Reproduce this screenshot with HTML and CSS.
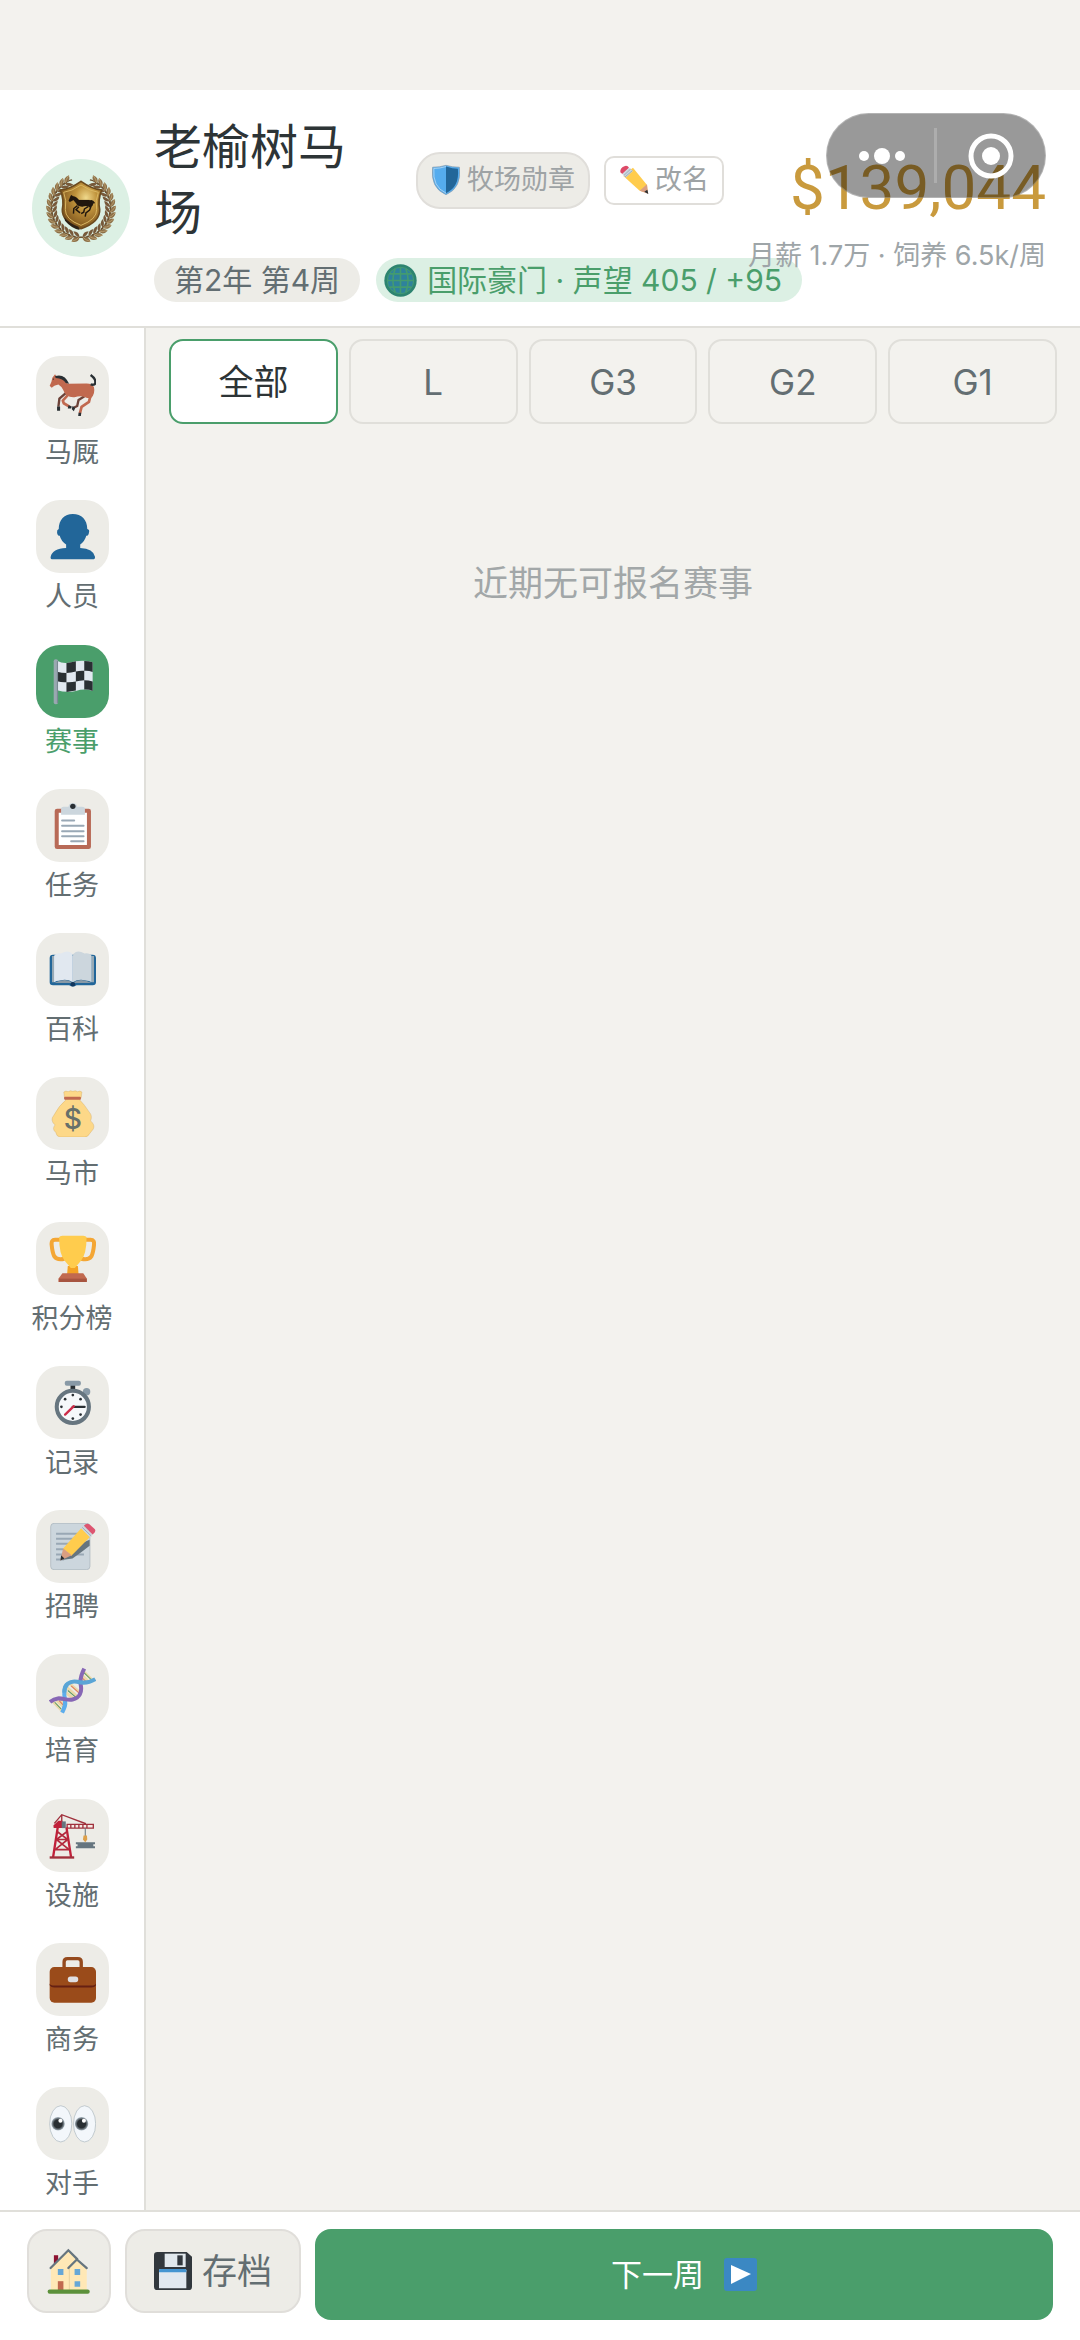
FILE: index.html
```html
<!DOCTYPE html>
<html lang="zh-CN">
<head>
    <meta charset="UTF-8">
    <meta name="viewport" content="width=device-width, initial-scale=1.0">
    <title>老榆树马场</title>
    <link rel="stylesheet" href="styles.css">
</head>
<body>
    <div class="app">
        <header class="header">
            <div class="header__avatar">
                <svg viewBox="-105 -105 210 210" aria-hidden="true">
                    <defs>
                        <radialGradient id="gold" cx="62%" cy="35%" r="75%">
                            <stop offset="0" stop-color="#f0d98c"/>
                            <stop offset=".35" stop-color="#c0933c"/>
                            <stop offset="1" stop-color="#6d4415"/>
                        </radialGradient>
                        <g id="leaf">
                            <path d="M-14-86Q2-92 16-87" fill="none" stroke="#6a5030" stroke-width="4"/>
                            <path d="M-8-88Q-6-106 14-104Q13-88-8-88Z" fill="#8d7048"/>
                            <path d="M-6-88Q-2-96 13-103" fill="none" stroke="#c4aa7a" stroke-width="2"/>
                            <path d="M-8-87Q4-88 13-72Q-4-70-8-87Z" fill="#77593a"/>
                        </g>
                        <g id="branch">
                            <use href="#leaf" transform="rotate(188)"/>
                            <use href="#leaf" transform="rotate(200)"/>
                            <use href="#leaf" transform="rotate(211)"/>
                            <use href="#leaf" transform="rotate(222)"/>
                            <use href="#leaf" transform="rotate(233)"/>
                            <use href="#leaf" transform="rotate(244)"/>
                            <use href="#leaf" transform="rotate(255)"/>
                            <use href="#leaf" transform="rotate(266)"/>
                            <use href="#leaf" transform="rotate(277)"/>
                            <use href="#leaf" transform="rotate(288)"/>
                            <use href="#leaf" transform="rotate(299)"/>
                            <use href="#leaf" transform="rotate(310)"/>
                            <use href="#leaf" transform="rotate(321)"/>
                            <use href="#leaf" transform="rotate(332)"/>
                        </g>
                    </defs>
                    <use href="#branch"/>
                    <use href="#branch" transform="scale(-1 1)"/>
                    <path d="M-62-54Q-34-56 0-80Q34-56 62-54Q50-24 56 4Q58 42 0 62Q-58 42-56 4Q-50-24-62-54Z" fill="url(#gold)" stroke="#6b4a1e" stroke-width="5"/>
                    <path d="M-52-47Q-28-50 0-69Q28-50 52-47Q42-22 47 4Q48 34 0 52Q-48 34-47 4Q-42-22-52-47Z" fill="none" stroke="#d9b662" stroke-width="3"/>
                    <path d="M-48 38Q-30 60-4 66L-8 56Q-34 48-50 28Z" fill="#2d2116"/>
                    <g transform="translate(-38 -48) scale(.55)" fill="#20160e" stroke="#20160e">
                        <path d="M2 48L12 22L18 16L22 22Q44 24 58 44L112 44Q130 44 136 60Q134 80 118 84Q98 72 76 80Q50 80 42 62L28 44L8 54Z"/>
                        <path d="M122 48Q134 46 142 62M50 74L30 90L28 118M58 80L42 96L64 114M108 80L88 92L84 110L70 118M124 78L116 98L96 114L92 134" fill="none" stroke-width="8"/>
                    </g>
                </svg>
            </div>
            <div class="header__info">
                <div class="header__title">
                    <h1 class="header__name">老榆树马场</h1>
                    <button type="button" class="tag tag--medal">
                        <svg class="tag__icon" viewBox="0 0 96 96" aria-hidden="true">
                            <path d="M48 1Q28 7 5 7Q-3 74 48 95Q99 74 91 7Q68 7 48 1Z" fill="#55acee" stroke="#8899a6" stroke-width="2"/>
                            <path d="M48 5Q70 12 86 12Q92 70 48 90Z" fill="#226699"/>
                            <path d="M48 5Q28 11 9 11Q4 70 48 90" fill="none" stroke="#d5e7f3" stroke-width="2"/>
                        </svg>
                        牧场勋章
                    </button>
                    <button type="button" class="tag tag--rename">
                        <svg class="tag__icon" viewBox="0 0 90 90" aria-hidden="true">
                            <path d="M24 22L42 8L84 60L86 84L62 77L14 34Z" fill="#ffcc4d"/>
                            <path d="M62 77L84 58L87 86Z" fill="#d99e82"/>
                            <path d="M76 80L85 74L88 87Z" fill="#292f33"/>
                            <path d="M4 22Q2 8 18 3Q26 1 30 8L10 27Z" fill="#dd4a68"/>
                            <path d="M10 27L30 8L42 18L20 38Z" fill="#ccd6dd"/>
                            <path d="M14 32L35 12M18 36L40 17" stroke="#8899a6" stroke-width="2"/>
                        </svg>
                        改名
                    </button>
                </div>
                <div class="header__chips">
                    <span class="chip">第2年 第4周</span>
                    <span class="chip chip--rank">
                        <svg class="chip__icon" viewBox="0 0 100 100" aria-hidden="true">
                            <circle cx="50" cy="50" r="49" fill="#2d8470"/>
                            <circle cx="50" cy="50" r="40" fill="#2e829c"/>
                            <path d="M50 10V90M10 50H90M18 30H82M18 70H82M34 14Q20 50 34 86M66 14Q80 50 66 86" fill="none" stroke="#439b70" stroke-width="5"/>
                            <circle cx="50" cy="50" r="40" fill="none" stroke="#439b70" stroke-width="3"/>
                        </svg>
                        国际豪门 · 声望 405 / +95
                    </span>
                </div>
            </div>
            <div class="header__money">
                <strong class="header__cash">$139,044</strong>
                <span class="header__cost">月薪 1.7万 · 饲养 6.5k/周</span>
            </div>
            <div class="capsule">
                <button type="button" class="capsule__btn" aria-label="更多">
                    <svg width="48" height="18" viewBox="0 0 48 18" fill="#fff"><circle cx="6" cy="9" r="5"/><circle cx="24" cy="9" r="8"/><circle cx="42" cy="9" r="5"/></svg>
                </button>
                <button type="button" class="capsule__btn" aria-label="关闭">
                    <svg width="46" height="46" viewBox="0 0 46 46"><circle cx="23" cy="23" r="20" fill="none" stroke="#fff" stroke-width="5"/><circle cx="23" cy="23" r="9" fill="#fff"/></svg>
                </button>
            </div>
        </header>

        <div class="main">
            <nav class="sidebar">
                <button type="button" class="nav">
                    <span class="nav__icon">
                        <svg viewBox="0 0 140 140" aria-hidden="true">
                            <path d="M108 80L88 92L84 110L72 116" fill="none" stroke="#6d4238" stroke-width="7"/>
                            <path d="M50 72L31 88L28 112" fill="none" stroke="#6d4238" stroke-width="7"/>
                            <path d="M56 78L41 94L44 102L62 113M124 78L119 98L97 113L92 132" fill="none" stroke="#c1694f" stroke-width="8" stroke-linejoin="round"/>
                            <path d="M2 50Q8 40 10 26L18 16L22 22Q44 26 56 44L112 43Q130 44 134 54Q138 72 126 86Q116 88 108 84Q94 78 76 84Q50 86 42 62Q38 52 28 46L16 50L8 56Z" fill="#c1694f"/>
                            <path d="M18 21Q46 12 60 44L50 42Q42 28 20 27Z" fill="#292f33"/>
                            <path d="M124 46Q139 50 138 38Q138 28 124 18" fill="none" stroke="#292f33" stroke-width="7"/>
                            <circle cx="13" cy="30" r="2" fill="#292f33"/>
                            <path d="M24 112H33V124H24ZM58 108L68 112L66 118H56ZM70 110L78 116L74 126L68 120ZM88 130L96 130L95 140H87Z" fill="#292f33"/>
                        </svg>
                    </span>
                    马厩
                </button>
                <button type="button" class="nav">
                    <span class="nav__icon">
                        <svg viewBox="0 0 140 140" aria-hidden="true">
                            <path d="M71 3C97 3 114 20 114 48Q122 50 119 58Q118 68 111 68Q107 84 93 94V104Q132 106 137 130Q138 138 130 138H12Q3 138 5 130Q10 106 51 104V94Q36 84 32 68Q25 68 24 58Q23 50 29 48C29 20 46 3 71 3Z" fill="#226699"/>
                        </svg>
                    </span>
                    人员
                </button>
                <button type="button" class="nav nav--active" aria-current="page">
                    <span class="nav__icon">
                        <svg viewBox="0 0 140 140" aria-hidden="true">
                            <path d="M24 8Q38 16 52 15Q66 14 80 10Q106 6 130 13V98Q106 90 80 98Q52 104 24 96Z" fill="#e1e8f0"/>
                            <path d="M52 15Q66 14 80 10V40Q66 44 52 45ZM105 9Q118 9 130 13V42Q118 37 105 38ZM24 41Q38 45 52 45V72Q38 73 24 69ZM80 40Q92 37 105 38V66Q92 67 80 70ZM52 72Q66 73 80 70V97Q66 100 52 101ZM105 66Q118 66 130 70V98Q118 93 105 94Z" fill="#292f33"/>
                            <rect x="14" y="4" width="13" height="134" rx="6" fill="#99a8b0"/>
                            <path d="M25 9V134" stroke="#66757f" stroke-width="2"/>
                        </svg>
                    </span>
                    赛事
                </button>
                <button type="button" class="nav">
                    <span class="nav__icon">
                        <svg viewBox="0 0 140 140" aria-hidden="true">
                            <rect x="17" y="20" width="108" height="120" rx="7" fill="#b86a57"/>
                            <path d="M29 32H113V128H29Z" fill="#fff"/>
                            <path d="M36 38V20Q36 14 44 14H58Q60 3 71 3Q82 3 84 14H98Q107 14 107 20V38Z" fill="#ccd6dd"/>
                            <circle cx="71" cy="13" r="8" fill="#292f33"/>
                            <path d="M39 55H75M39 71H103M39 87H103M39 102H103M66 117H103" stroke="#99a8b5" stroke-width="6" stroke-linecap="round"/>
                        </svg>
                    </span>
                    任务
                </button>
                <button type="button" class="nav">
                    <span class="nav__icon">
                        <svg viewBox="0 0 140 140" aria-hidden="true">
                            <path d="M2 36Q2 26 12 26H130Q140 26 140 36V108Q140 117 130 117H82Q71 124 60 117H12Q2 117 2 108Z" fill="#226699"/>
                            <path d="M9 30H15V108H9ZM127 30H134V108H127Z" fill="#99aab5"/>
                            <path d="M15 30Q20 20 36 22Q52 14 62 18Q71 22 71 30V108Q55 98 36 102Q20 104 15 108Z" fill="#e1e8f0"/>
                            <path d="M127 30Q122 20 106 22Q90 14 80 18Q71 22 71 30V108Q87 98 106 102Q122 104 127 108Z" fill="#ccd6dd"/>
                            <path d="M15 110Q50 92 71 110Q92 92 127 110Z" fill="#8899a6"/>
                            <circle cx="71" cy="114" r="7" fill="#12365c"/>
                        </svg>
                    </span>
                    百科
                </button>
                <button type="button" class="nav">
                    <span class="nav__icon">
                        <svg viewBox="0 0 140 140" aria-hidden="true">
                            <path d="M46 22L44 6Q50 1 57 5Q64 0 71 4Q79 0 85 5Q92 1 98 6L96 22L92 30Q106 44 120 66Q130 76 124 92Q138 104 132 116Q126 124 121 130Q116 140 106 140H32Q22 138 20 126Q8 116 18 104Q2 90 14 76Q30 46 50 30Z" fill="#fdd888" stroke="#c9a05f" stroke-width="1"/>
                            <rect x="45" y="20" width="50" height="9" rx="3" fill="#c1694f"/>
                            <text x="71" y="115" class="bag-sign">$</text>
                        </svg>
                    </span>
                    马市
                </button>
                <button type="button" class="nav">
                    <span class="nav__icon">
                        <svg viewBox="0 0 140 140" aria-hidden="true">
                            <path d="M35 14H18Q6 14 8 30Q10 52 16 64Q24 76 46 71M107 14H124Q136 14 134 30Q132 52 126 64Q118 76 96 71" fill="none" stroke="#f4a634" stroke-width="12"/>
                            <path d="M56 92H86L88 116H54Z" fill="#f4a223"/>
                            <path d="M30 7Q32 2 40 2H102Q110 2 112 7Q112 60 94 78Q84 90 77 98H65Q58 90 48 78Q30 60 30 7Z" fill="#ffcc4d"/>
                            <path d="M40 114H102L113 130V140H28V130Z" fill="#c1694f"/>
                            <path d="M30 130H112V140H30Z" fill="#a75540"/>
                        </svg>
                    </span>
                    积分榜
                </button>
                <button type="button" class="nav">
                    <span class="nav__icon">
                        <svg viewBox="0 0 140 140" aria-hidden="true">
                            <path d="M64 18H78V32H64Z" fill="#292f33"/>
                            <rect x="47" y="5" width="48" height="15" rx="6" fill="#8899a6"/>
                            <circle cx="112" cy="38" r="11" fill="#8899a6"/>
                            <circle cx="71" cy="83" r="48" fill="#f5f8fa" stroke="#66757f" stroke-width="12"/>
                            <g fill="#292f33"><circle cx="71" cy="48" r="4"/><circle cx="71" cy="118" r="4"/><circle cx="37" cy="83" r="4"/><circle cx="48" cy="60" r="4"/><circle cx="94" cy="60" r="4"/><circle cx="94" cy="106" r="4"/></g>
                            <path d="M71 83H106" stroke="#292f33" stroke-width="7" stroke-linecap="round"/>
                            <path d="M74 81L48 106" stroke="#cc2b48" stroke-width="7" stroke-linecap="round"/>
                        </svg>
                    </span>
                    记录
                </button>
                <button type="button" class="nav">
                    <span class="nav__icon">
                        <svg viewBox="0 0 140 140" aria-hidden="true">
                            <rect x="5" y="1" width="117" height="138" rx="10" fill="#ccd6dd" stroke="#a5b1ba" stroke-width="2"/>
                            <path d="M21 32H88M21 47H75M21 62H60M21 78H52M21 94H104M21 109H45" stroke="#99a8b5" stroke-width="6"/>
                            <path d="M38 110L70 106Q96 88 121 68V50L96 60Z" fill="#66757f"/>
                            <path d="M42 76L96 16L122 42L66 98Z" fill="#ffcc4d"/>
                            <path d="M42 76L68 96L34 112Z" fill="#d99e82"/>
                            <path d="M36 96L46 106L34 112Z" fill="#292f33"/>
                            <path d="M96 16L104 8L130 34L122 42Z" fill="#ccd6dd"/>
                            <path d="M99 13L126 39" stroke="#8899a6" stroke-width="2"/>
                            <path d="M104 8Q112-1 122 5L136 18Q142 25 130 34Z" fill="#dd5570"/>
                        </svg>
                    </span>
                    招聘
                </button>
                <button type="button" class="nav">
                    <span class="nav__icon">
                        <svg viewBox="0 0 140 140" aria-hidden="true">
                            <path d="M12 104L40 132M22 100L44 120M32 97L46 110M100 10L130 40M98 24L118 44M96 36L108 48" stroke="#ecd9a9" stroke-width="8"/>
                            <path d="M52 60L88 92M62 50L94 78M50 76L76 96" stroke="#ecd9a9" stroke-width="9"/>
                            <path d="M17 105L36 125M104 17L126 38M56 70L82 92" stroke="#5c9a63" stroke-width="3"/>
                            <path d="M30 100L42 113M98 32L112 45M66 56L90 78" stroke="#e07a5f" stroke-width="3"/>
                            <path d="M39 136C46 122 50 116 48 98C44 80 42 64 54 52" fill="none" stroke="#5dadec" stroke-width="12"/>
                            <path d="M3 104C30 82 48 102 70 97C92 92 98 74 95 56C91 38 96 22 105 5" fill="none" stroke="#8767b5" stroke-width="12"/>
                            <path d="M46 76C44 52 62 40 84 44C106 50 122 46 138 36" fill="none" stroke="#5aa5d6" stroke-width="12"/>
                        </svg>
                    </span>
                    培育
                </button>
                <button type="button" class="nav">
                    <span class="nav__icon">
                        <svg viewBox="0 0 140 140" aria-hidden="true">
                            <path d="M16 34L38 8L110 35M38 8V48" fill="none" stroke="#a0303c" stroke-width="4"/>
                            <path d="M54 37H132V48H54Z" fill="#f5e9e4" stroke="#a0303c" stroke-width="4"/>
                            <path d="M65 37V48M77 37V48M89 37V48M101 37V48M113 37V48" stroke="#a0303c" stroke-width="4"/>
                            <path d="M12 136L26 46M66 136L52 46" stroke="#c0203a" stroke-width="7"/>
                            <path d="M24 58L56 82L18 112M54 58L22 82L60 112M22 82H56M18 112H60" fill="none" stroke="#b3283c" stroke-width="5"/>
                            <path d="M2 132H75V139H2Z" fill="#a0303c"/>
                            <path d="M13 40L28 26H40V48H14Z" fill="#c0203a"/>
                            <path d="M38 28H50V48H38Z" fill="#66757f"/>
                            <path d="M108 48V76" stroke="#66757f" stroke-width="3"/>
                            <path d="M103 70H113L114 82L108 90L101 82Z" fill="#dda04a"/>
                            <path d="M80 90H137V96H132V102H137V108H80V102H85V96H80Z" fill="#66757f"/>
                        </svg>
                    </span>
                    设施
                </button>
                <button type="button" class="nav">
                    <span class="nav__icon">
                        <svg viewBox="0 0 140 140" aria-hidden="true">
                            <path d="M45 34V18Q45 8 55 8H86Q96 8 96 18V34" fill="none" stroke="#954a1e" stroke-width="10"/>
                            <rect x="2" y="33" width="138" height="106" rx="14" fill="#9a4b1a"/>
                            <path d="M2 82Q4 88 16 88H126Q138 88 140 82V87Q136 94 126 94H16Q6 94 2 87Z" fill="#662113"/>
                            <rect x="56" y="61" width="31" height="17" rx="8" fill="#dfdfe3"/>
                        </svg>
                    </span>
                    商务
                </button>
                <button type="button" class="nav">
                    <span class="nav__icon">
                        <svg viewBox="0 0 140 140" aria-hidden="true">
                            <defs><radialGradient id="pupil"><stop offset=".6" stop-color="#292f33"/><stop offset="1" stop-color="#a9b6bf"/></radialGradient></defs>
                            <ellipse cx="35" cy="71" rx="33" ry="54" fill="#f3f7fb" stroke="#aab5bc" stroke-width="2"/>
                            <ellipse cx="106" cy="71" rx="33" ry="54" fill="#f3f7fb" stroke="#aab5bc" stroke-width="2"/>
                            <circle cx="27" cy="71" r="20" fill="url(#pupil)"/><circle cx="97" cy="71" r="20" fill="url(#pupil)"/>
                            <circle cx="34" cy="62" r="6" fill="#fff"/><circle cx="104" cy="62" r="6" fill="#fff"/>
                        </svg>
                    </span>
                    对手
                </button>
            </nav>

            <main class="content">
                <div class="tabs">
                    <button type="button" class="tabs__item tabs__item--active">全部</button>
                    <button type="button" class="tabs__item">L</button>
                    <button type="button" class="tabs__item">G3</button>
                    <button type="button" class="tabs__item">G2</button>
                    <button type="button" class="tabs__item">G1</button>
                </div>
                <p class="empty">近期无可报名赛事</p>
            </main>
        </div>

        <footer class="footer">
            <button type="button" class="btn btn--home" aria-label="主页">
                <svg width="46" height="46" viewBox="0 0 140 140" aria-hidden="true">
                    <path d="M24 22H37V50H24Z" fill="#8d1230"/>
                    <path d="M15 58L69 9L95 36L124 60V130H15Z" fill="#ffe8b6"/>
                    <path d="M71 58V130" stroke="#e8cf9b" stroke-width="3"/>
                    <path d="M14 61L68 7L95 34M68 61L94 35L124 61" fill="none" stroke="#66757f" stroke-width="7" stroke-linecap="round"/>
                    <path d="M36 64H53V82H36ZM87 64H104V82H87ZM87 101H104V118H87Z" fill="#67a7d6"/>
                    <path d="M36 101H53V128H36Z" fill="#c1694f"/>
                    <rect x="5" y="126" width="128" height="13" rx="6" fill="#5c913b"/>
                </svg>
            </button>
            <button type="button" class="btn btn--save">
                <svg width="38" height="38" viewBox="0 0 114 114" aria-hidden="true">
                    <path d="M10 0H98L114 14V104Q114 114 104 114H10Q0 114 0 104V10Q0 0 10 0Z" fill="#31373d"/>
                    <path d="M32 5H95V45H32Z" fill="#e1e8ed"/>
                    <path d="M70 10H86V40H70Z" fill="#31373d"/>
                    <path d="M15 55Q15 51 20 51H92Q97 51 97 55V109H15Z" fill="#e1e8f0"/>
                    <path d="M15 61V55Q15 51 20 51H92Q97 51 97 55V61Z" fill="#4595d2"/>
                </svg>
                存档
            </button>
            <button type="button" class="btn btn--next">
                下一周
                <svg width="33" height="33" viewBox="0 0 33 33" aria-hidden="true">
                    <rect width="33" height="33" rx="3" fill="#3b88c3"/>
                    <path d="M7 7L27 16L7 26Z" fill="#fff"/>
                </svg>
            </button>
        </footer>
    </div>
</body>
</html>
```
FILE: styles.css
```css
* {
    box-sizing: border-box;
}
body {
    margin: 0;
    background: #f3f2ee;
    color: #2d3436;
    font-family: Inter, "Noto Sans CJK SC", sans-serif;
}
button {
    margin: 0;
    padding: 0;
    border: 0;
    background: none;
    color: inherit;
    font-family: inherit;
    cursor: pointer;
}
svg {
    display: block;
    flex: none;
}
.app {
    display: flex;
    flex-direction: column;
    min-height: 100vh;
    padding-top: 90px;
}

/* header */
.header {
    position: relative;
    display: flex;
    align-items: center;
    gap: 24px;
    padding: 24px 34px 24px 32px;
    border-bottom: 2px solid #e0dfda;
    background: #fff;
}
.header__avatar {
    display: flex;
    align-items: center;
    justify-content: center;
    flex: none;
    width: 98px;
    height: 98px;
    border-radius: 50%;
    background: #dcf0e4;
}
.header__avatar svg {
    width: 70px;
    height: 70px;
}
.header__info {
    flex: 1;
    min-width: 0;
}
.header__title {
    display: flex;
    align-items: center;
    gap: 14px;
}
.header__name {
    flex: 1;
    margin: 0;
    padding-right: 12px;
    font-size: 48px;
    font-weight: 400;
    line-height: 66px;
}
.tag {
    display: flex;
    align-items: center;
    flex: none;
    gap: 6px;
    padding: 0 13px;
    border: 2px solid #e0deda;
    color: #9ea3a5;
    font-size: 27px;
    line-height: 36px;
    white-space: nowrap;
}
.tag--medal {
    height: 57px;
    border-radius: 24px;
    background: #edece7;
}
.tag--rename {
    height: 49px;
    border-radius: 10px;
    background: #fff;
}
.tag__icon {
    width: 30px;
    height: 32px;
}
.header__chips {
    display: flex;
    gap: 16px;
    margin-top: 12px;
}
.chip {
    display: flex;
    align-items: center;
    flex: none;
    gap: 10px;
    height: 44px;
    padding: 0 20px;
    border-radius: 22px;
    background: #edece7;
    color: #636e72;
    font-size: 30px;
    line-height: 44px;
    white-space: nowrap;
}
.chip--rank {
    padding-left: 8px;
    background: #dcf0e4;
    color: #4a9e6b;
}
.chip__icon {
    width: 33px;
    height: 33px;
}
.header__money {
    position: relative;
    display: flex;
    flex-direction: column;
    flex: none;
    text-align: right;
    white-space: nowrap;
}
.header__cash {
    color: #c99a3d;
    font-family: Roboto, sans-serif;
    font-size: 62px;
    font-weight: 400;
    line-height: 96px;
}
.header__cost {
    color: #9ea5a8;
    font-size: 27px;
    line-height: 40px;
}
.capsule {
    position: absolute;
    top: 23px;
    right: 34px;
    display: flex;
    width: 220px;
    height: 85px;
    border: 1px solid rgba(255, 255, 255, .25);
    border-radius: 43px;
    background: rgba(0, 0, 0, .4);
}
.capsule__btn {
    position: relative;
    display: flex;
    align-items: center;
    justify-content: center;
    flex: 1;
}
.capsule__btn + .capsule__btn:before {
    content: "";
    position: absolute;
    top: 14px;
    bottom: 14px;
    left: -2px;
    width: 3px;
    background: rgba(255, 255, 255, .2);
}

/* sidebar + content */
.main {
    display: flex;
    flex: 1;
}
.sidebar {
    display: flex;
    flex-direction: column;
    justify-content: space-between;
    flex: none;
    gap: 16px;
    width: 146px;
    padding: 28px 0 8px;
    border-right: 2px solid #e0dfda;
    background: #fff;
}
.nav {
    display: flex;
    flex-direction: column;
    align-items: center;
    gap: 6px;
    color: #636e72;
    font-size: 27px;
    line-height: 36px;
}
.nav__icon {
    display: flex;
    align-items: center;
    justify-content: center;
    width: 73px;
    height: 73px;
    border-radius: 24px;
    background: #edece7;
}
.nav__icon svg {
    width: 47px;
    height: 47px;
}
.nav--active {
    color: #4a9e6b;
}
.nav--active .nav__icon {
    background: #4a9e6b;
}
.bag-sign {
    fill: #67706a;
    font: 500 84px Inter, sans-serif;
    text-anchor: middle;
}
.content {
    flex: 1;
    padding: 11px 23px;
}
.tabs {
    display: flex;
    gap: 11px;
}
.tabs__item {
    flex: 1;
    height: 85px;
    border: 2px solid #e0dfda;
    border-radius: 14px;
    color: #636e72;
    font-size: 35px;
    line-height: 50px;
}
.tabs__item--active {
    border-color: #4a9e6b;
    background: #fff;
    color: #2d3436;
}
.empty {
    margin: 134px 0 0;
    color: #a2a7a8;
    font-size: 35px;
    line-height: 50px;
    text-align: center;
}

/* bottom bar */
.footer {
    display: flex;
    align-items: flex-start;
    gap: 14px;
    padding: 17px 27px 20px;
    border-top: 2px solid #e0dfda;
    background: #fff;
}
.btn {
    display: flex;
    align-items: center;
    justify-content: center;
    flex: none;
    gap: 10px;
    height: 84px;
    border: 2px solid #e0deda;
    border-radius: 20px;
    background: #edece7;
    color: #636e72;
    font-size: 35px;
    line-height: 50px;
}
.btn--home {
    width: 84px;
}
.btn--save {
    padding: 0 27px;
}
.btn--next {
    flex: 1;
    gap: 20px;
    height: 91px;
    border: 0;
    border-radius: 16px;
    background: #4a9e6b;
    color: #fff;
    font-size: 31px;
}
```
